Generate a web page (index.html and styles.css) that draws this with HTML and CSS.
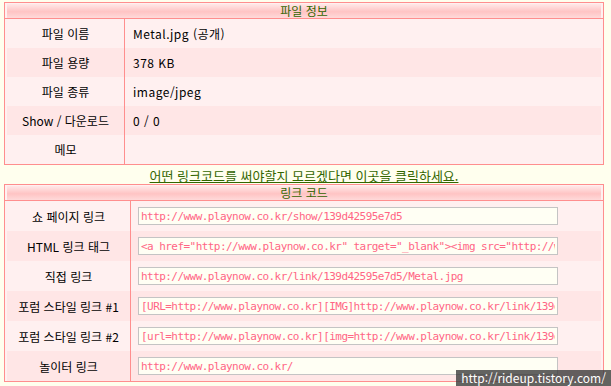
FILE: index.html
```html
<!DOCTYPE html>
<html lang="ko">
<head>
    <meta charset="UTF-8">
    <title>파일 정보</title>
    <link rel="stylesheet" href="styles.css">
</head>
<body>
    <div class="page">
        <div class="box">
            <div class="box-head"><div class="box-title">파일 정보</div></div>
            <table class="rows info">
                <tr><th>파일 이름</th><td>Metal.jpg (공개)</td></tr>
                <tr class="alt"><th>파일 용량</th><td>378 KB</td></tr>
                <tr><th>파일 종류</th><td>image/jpeg</td></tr>
                <tr class="alt"><th>Show / 다운로드</th><td>0 / 0</td></tr>
                <tr><th>메모</th><td></td></tr>
            </table>
        </div>

        <p class="help"><a href="#">어떤 링크코드를 써야할지 모르겠다면 이곳을 클릭하세요.</a></p>

        <div class="box">
            <div class="box-head"><div class="box-title">링크 코드</div></div>
            <table class="rows code">
                <tr><th>쇼 페이지 링크</th><td><input type="text" value="http://www.playnow.co.kr/show/139d42595e7d5"></td></tr>
                <tr class="alt"><th>HTML 링크 태그</th><td><input type="text" value='&lt;a href="http://www.playnow.co.kr" target="_blank"&gt;&lt;img src="http://www.playnow.co.kr/link/139d42595e7d5/Metal.jpg"&gt;&lt;/a&gt;'></td></tr>
                <tr><th>직접 링크</th><td><input type="text" value="http://www.playnow.co.kr/link/139d42595e7d5/Metal.jpg"></td></tr>
                <tr class="alt"><th>포럼 스타일 링크 #1</th><td><input type="text" value="[URL=http://www.playnow.co.kr][IMG]http://www.playnow.co.kr/link/139d42595e7d5/Metal.jpg[/IMG][/URL]"></td></tr>
                <tr><th>포럼 스타일 링크 #2</th><td><input type="text" value="[url=http://www.playnow.co.kr][img=http://www.playnow.co.kr/link/139d42595e7d5/Metal.jpg][/url]"></td></tr>
                <tr class="alt"><th>놀이터 링크</th><td><input type="text" value="http://www.playnow.co.kr/"></td></tr>
            </table>
        </div>
    </div>

    <div class="watermark">http://rideup.tistory.com/</div>
</body>
</html>
```

FILE: styles.css
```css
body {
    margin: 0;
    background-color: #ffffee;
    font-family: "Noto Sans CJK KR", "DejaVu Sans", sans-serif;
    font-size: 12px;
    color: #000;
}
.page {
    padding: 2px 0 0 4px;
}
.box {
    width: 600px;
    box-sizing: border-box;
    border: 1px solid #ff8e8e;
    background-color: #fff0f0;
    padding: 1px 2px 0;
}
.box-head {
    margin: 0 -2px;
    padding: 0 2px;
    border-bottom: 1px solid #ff8e8e;
}
.box-title {
    height: 14px;
    line-height: 14px;
    text-align: center;
    color: #336600;
    background: linear-gradient(#ffe8e8, #ffc4c4 55%, #ffdada);
}
.rows {
    width: 100%;
    border-collapse: collapse;
    border-spacing: 0;
}
.rows th {
    font-weight: normal;
    text-align: center;
    padding: 0;
}
.rows td {
    border-left: 1px solid #ff8e8e;
    padding: 0;
}
.rows tr.alt {
    background-color: #ffe6e6;
}
.info tr {
    height: 29px;
}
.info th {
    width: 117px;
}
.info td {
    padding-left: 8px;
    letter-spacing: 0.5px;
}
.code tr {
    height: 30px;
}
.code th {
    width: 123px;
}
.code td {
    padding-left: 7px;
}
.code input {
    display: block;
    width: 420px;
    height: 18px;
    box-sizing: border-box;
    margin: 0;
    padding: 0 2px;
    border: 1px solid #c4c4c4;
    background-color: #fffff4;
    color: #ff6685;
    font-family: "DejaVu Sans Mono", monospace;
    font-size: 11px;
    letter-spacing: -0.55px;
}
.help {
    margin: 0;
    height: 19px;
    padding-top: 3px;
    box-sizing: border-box;
    width: 600px;
    text-align: center;
    font-size: 13px;
    line-height: 15px;
}
.help a {
    color: #336600;
}
.watermark {
    position: absolute;
    right: 0;
    bottom: 0;
    width: 155px;
    height: 16px;
    line-height: 16px;
    text-align: center;
    font-size: 12px;
    white-space: nowrap;
    color: #fff;
    background-color: rgba(60, 60, 60, 0.8);
}
```
